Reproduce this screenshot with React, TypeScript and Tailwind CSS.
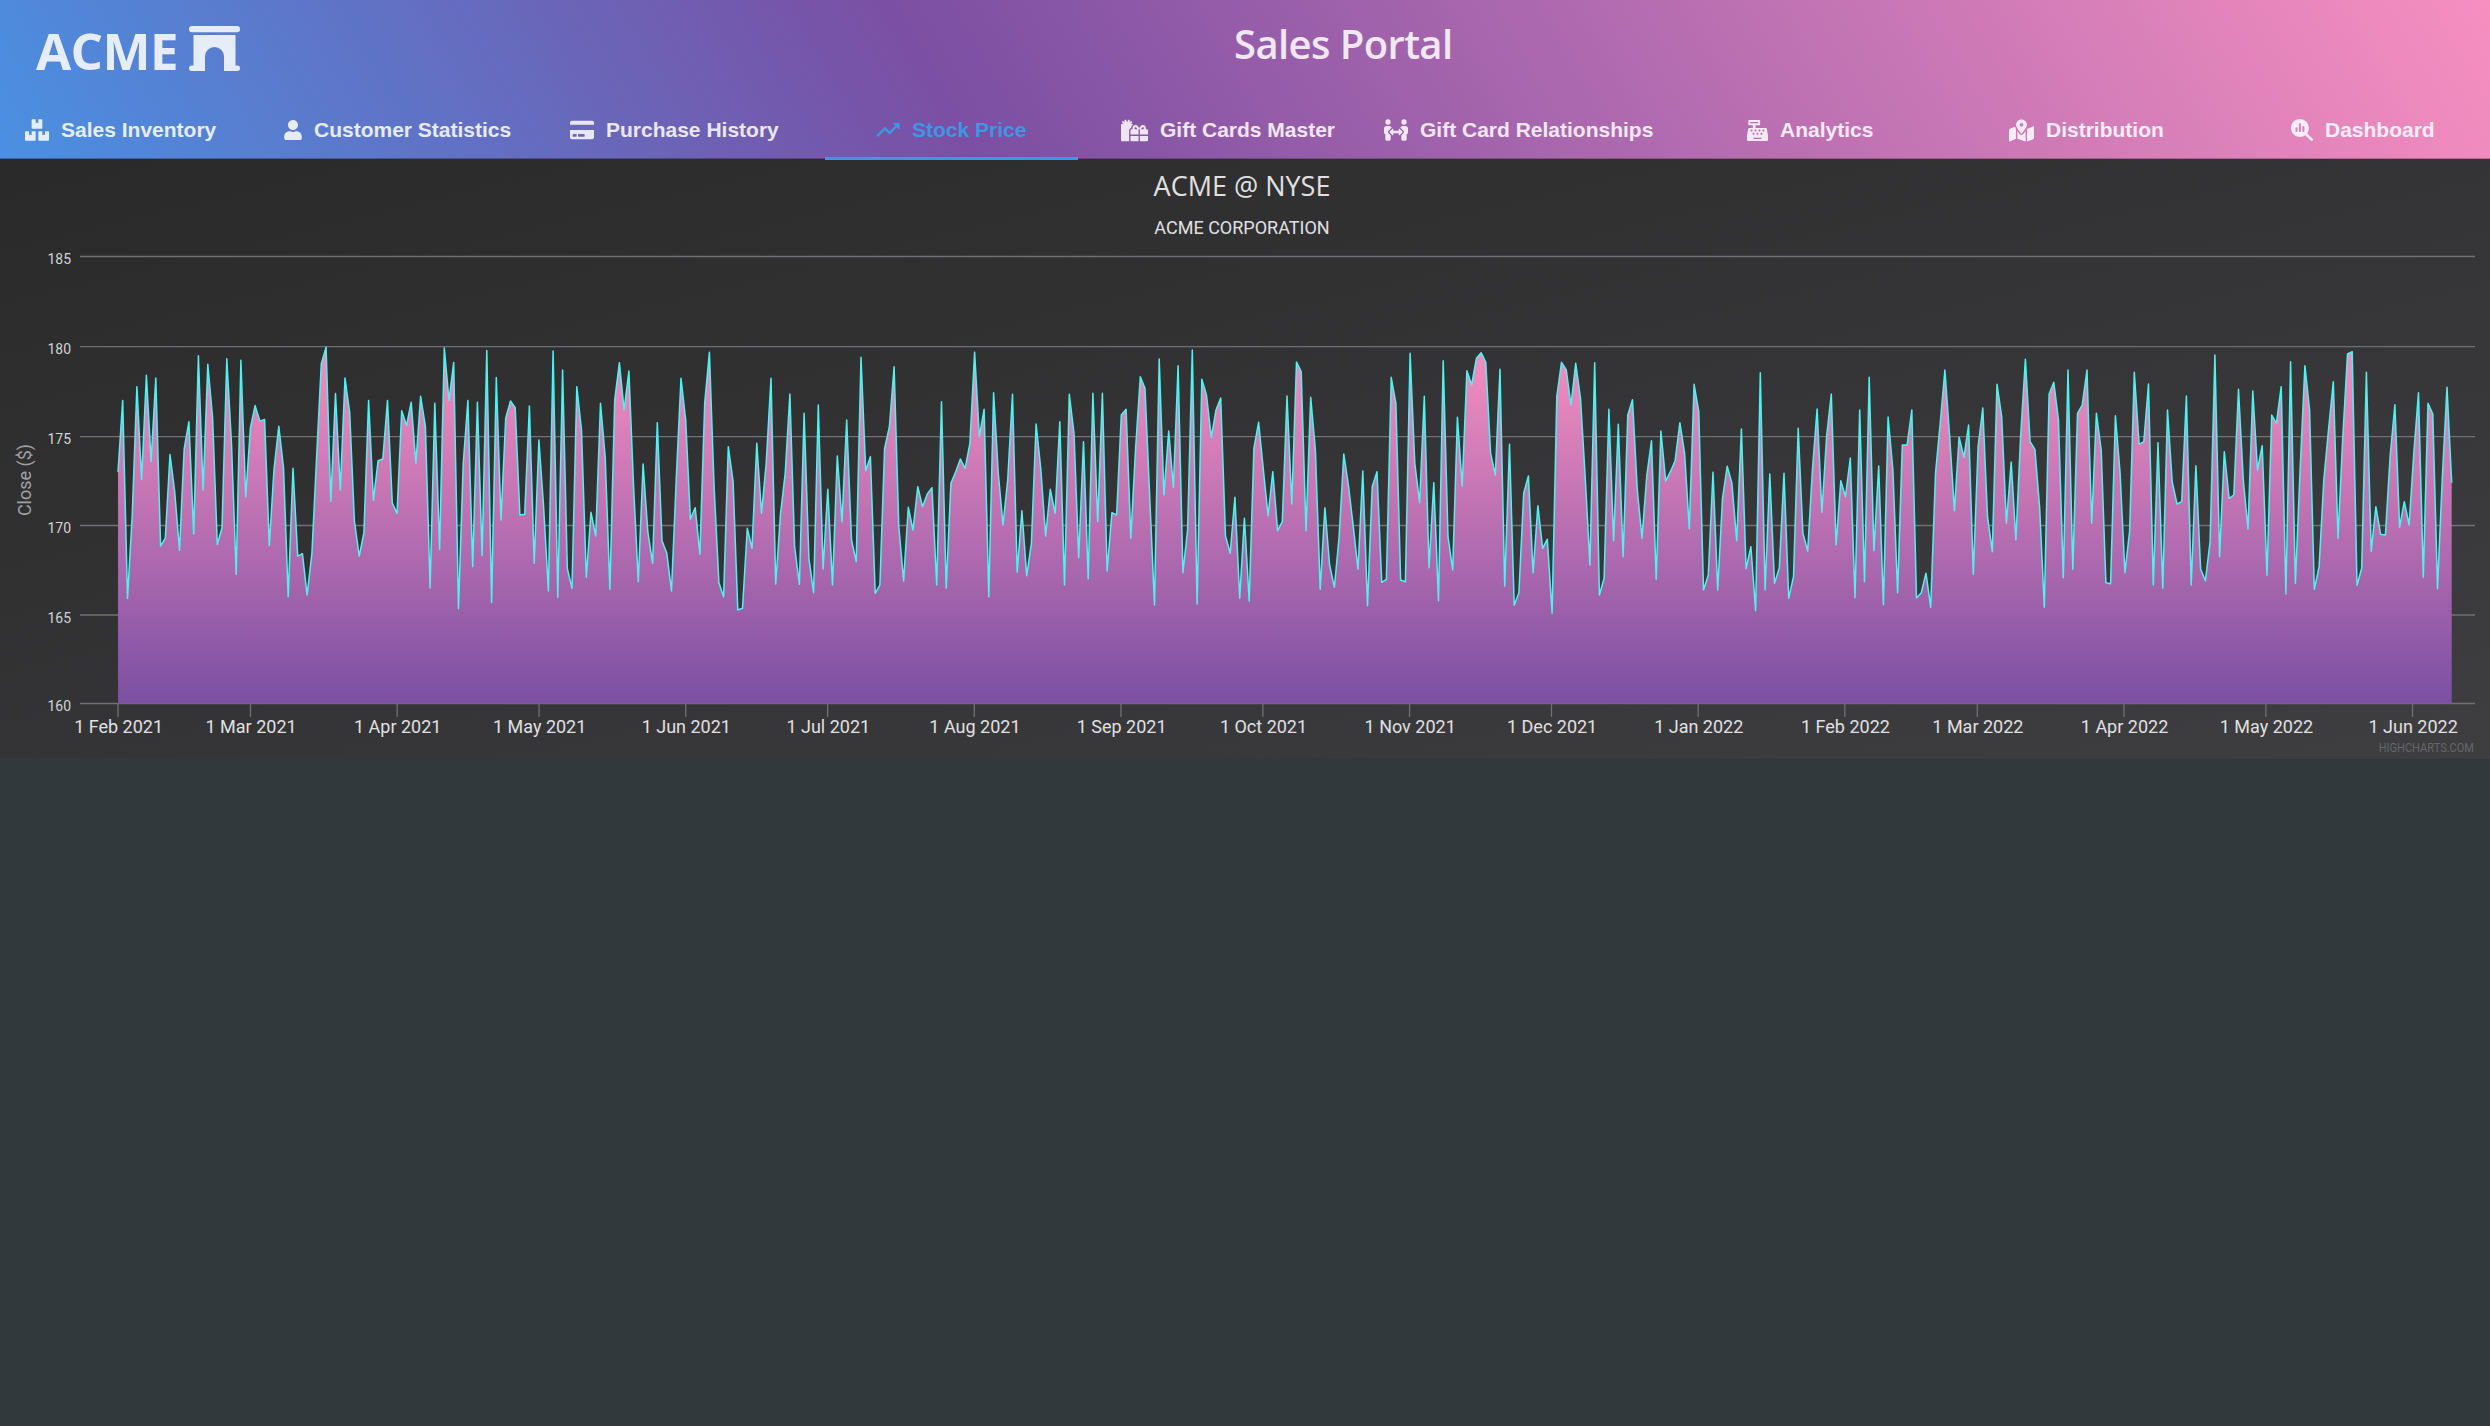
import React from "react";
import { FaBoxes, FaUser, FaCreditCard, FaGifts, FaPeopleArrows, FaCashRegister, FaMapMarkedAlt } from "react-icons/fa";
import { FaMagnifyingGlassChart } from "react-icons/fa6";
import { MdTrendingUp } from "react-icons/md";

// Traced close values, given as y in a 3x frame whose origin is page y=330.
const segA = [703,495,1070,830,455,725,422,672,430,918,895,652,760,930,635,557,883,365,755,390,545,913,865,374,620,1000,378,775,575,510,555,550,917,695,570,690,1065,692,947,940,1060,940,660,388,340,788,475,755,430,530,845,947,880,495,785,670,665,495,793,823,525,568,500,677,483,570,1040,503,928,343,495,385,1100,680,495,978,500,945,350,1082,428].map((z) => z * 1.033 - 300);
const segB = [570,265,213,233,555,553,228,700,330,530,783,63,802,120,715,775,170,300,742,547,618,220,380,778,210,98,240,123,470,755,402,605,700,278,632,670,783,450,145,270,568,533,673,220,67,470,758,800,350,455,840,835,595,655,340,550,400,145,762,555,430,192,650,763,250,685,788,225,717,478,765,378,575,270,630,695,82,422,380,790,765,355,290,110,590,753,532,600,470,530,492,473,765,215,775,460,425,387,415,340,67,320,238,800,188,430];
const segC = [585,450,193,727,542,737,640,282,420,618,478,550,275,765,193,310,683,335,746,190,575,190,723,548,555,255,238,625,360,140,175,500,825,87,495,303,472,107,728,600,60,822,148,195,322,240,204,618,670,502,805,565,813,355,277,420,557,425,602,575,198,522,96,125,602,202,360,778,533,705,772,620,372,470,590,718,423,827,470,425,757,748,142,220,750,755,70,400,518,199,713,458,812,92,620,720,262,468,122,165,85,68,97,370,435];
const segD = [118,768,343,826,788,490,438,728,527,655,628,850,200,97,120,225,100,205,440,705,98,795,745,238,632,283,680,255,209,480,625,440,332,748,303,453,425,392,278,370,596,163,245,780,735,427,780,505,409,460,632,297,716,650,842,128,780,432,760,715,430,805,740,295,610,663,420,237,547,320,192,645,452,500,384,803,240,755,142,662,408,824,261,420,788,345,345,240,804,788,730,832,430,280,120,320,542,322,382,285,733,350,234,560,665,163];
const segE = [260,580,396,630,320,88,335,358,530,832,192,157,270,743,120,718,250,225,120,580,250,360,758,761,257,430,728,605,127,343,335,162,765,338,775,240,455,522,515,198,765,407,717,752,635,75,680,365,505,495,178,450,597,183,420,347,736,255,280,170,792,95,760,420,107,240,778,710,450,300,155,625,320,72,65,766,715,127,664,530,613,615,380,224,592,515,585,370,188,742,220,252,776,450,172,458];

function spread(ys: number[], x0: number, x1: number) {
  return ys.map((z, i) => [x0 + ((x1 - x0) * i) / (ys.length - 1), 330 + z / 3] as const);
}
const points = [
  ...spread(segA, 118, 496.3),
  ...spread(segB, 501, 998.3),
  ...spread(segC, 1003, 1495.3),
  ...spread(segD, 1500, 1997),
  ...spread(segE, 2001.7, 2451.7),
];
const linePath = points.map(([x, y], i) => `${i ? "L" : "M"}${x.toFixed(1)} ${y.toFixed(1)}`).join("");
const areaPath = `${linePath}L2451.7 703.5L118 703.5Z`;

const yTicks = [
  ["185", 256.5],
  ["180", 346.7],
  ["175", 436.7],
  ["170", 525.5],
  ["165", 615],
  ["160", 703.5],
] as const;

const xTicks = [
  ["1 Feb 2021", 0],
  ["1 Mar 2021", 28],
  ["1 Apr 2021", 59],
  ["1 May 2021", 89],
  ["1 Jun 2021", 120],
  ["1 Jul 2021", 150],
  ["1 Aug 2021", 181],
  ["1 Sep 2021", 212],
  ["1 Oct 2021", 242],
  ["1 Nov 2021", 273],
  ["1 Dec 2021", 303],
  ["1 Jan 2022", 334],
  ["1 Feb 2022", 365],
  ["1 Mar 2022", 393],
  ["1 Apr 2022", 424],
  ["1 May 2022", 454],
  ["1 Jun 2022", 485],
] as const;

const tabs = [
  { label: "Sales Inventory", icon: <FaBoxes size={24} />, cls: "w-[259px]" },
  { label: "Customer Statistics", icon: <FaUser size={20} className="w-[18px]" />, cls: "w-[286px]" },
  { label: "Purchase History", icon: <FaCreditCard size={24} />, cls: "w-[255px]" },
  { label: "Stock Price", icon: <MdTrendingUp size={28} className="-mx-[2px]" />, cls: "w-[253px] pl-[51px]", active: true },
  { label: "Gift Cards Master", icon: <FaGifts size={27} />, cls: "w-[306px] pl-[43px]" },
  { label: "Gift Card Relationships", icon: <FaPeopleArrows size={24} />, cls: "w-[363px]" },
  { label: "Analytics", icon: <FaCashRegister size={21} />, cls: "w-[262px]" },
  { label: "Distribution", icon: <FaMapMarkedAlt size={25} />, cls: "w-[282px]" },
  { label: "Dashboard", icon: <FaMagnifyingGlassChart size={22} />, cls: "w-[175px]" },
];

function Arch() {
  return (
    <svg width="51" height="45" viewBox="0 0 51 45" fill="currentColor" className="ml-[12px] mt-[26px] shrink-0">
      <rect x="0" y="0" width="51" height="6.3" rx="3" />
      <path d="M4.5 9H46.5V39.5H48.25a2.75 2.75 0 0 1 0 5.5H35V30.5a9.5 9.5 0 0 0-19 0V45H2.75a2.75 2.75 0 0 1 0-5.5H4.5Z" />
    </svg>
  );
}

export default function App() {
  return (
    <div className="min-h-screen bg-[#32393c] font-['Liberation_Sans',sans-serif]">
      <header className="h-[159px] border-b border-[#00000040] bg-[linear-gradient(60deg,#4a90e2,#7b4fa3_38%,#f78fc0)] text-white/85">
        <div className="flex h-[100px]">
          <div className="flex w-[1234px] shrink-0 pl-[36px]">
            <span className="mt-[16px] h-[68px] w-[141px] font-['Open_Sans',sans-serif] text-[51px] leading-[68px] font-bold tracking-[-0.6px] whitespace-nowrap">ACME</span>
            <Arch />
          </div>
          <h1 className="mt-[14px] h-[60px] font-['Open_Sans',sans-serif] text-[40px] leading-[60px] font-semibold tracking-[-0.6px] whitespace-nowrap">Sales Portal</h1>
        </div>
        <nav className="flex h-[58px] pl-[25px]">
          {tabs.map((t) => (
            <div
              key={t.label}
              className={`relative flex shrink-0 items-center gap-[12px] pt-[2px] text-[21px] font-bold whitespace-nowrap ${t.cls} ${t.active ? "text-[#3f96e4]" : ""}`}
            >
              {t.icon}
              <span>{t.label}</span>
              {t.active && <span className="absolute right-0 -bottom-[2px] left-0 h-[3px] bg-[#3f96e4]" />}
            </div>
          ))}
        </nav>
      </header>
      <main className="h-[600px] bg-[linear-gradient(to_bottom_right,#2a2a2b,#3e3e40)]">
        <svg width="2490" height="600" viewBox="0 159 2490 600" className="block font-['Roboto',sans-serif]">
          <defs>
            <linearGradient id="area" x1="0" y1="0" x2="0" y2="1">
              <stop offset="0" stopColor="#f78fc0" />
              <stop offset="1" stopColor="#7b4fa3" />
            </linearGradient>
          </defs>
          <text x="1242" y="196" textAnchor="middle" fill="#e0e0e3" fontSize="27" fontFamily="'Open Sans', sans-serif">ACME @ NYSE</text>
          <text x="1242" y="234" textAnchor="middle" fill="#e0e0e3" fontSize="18">ACME CORPORATION</text>
          <text x="0" y="0" textAnchor="middle" fill="#a0a0a3" fontSize="18" transform="translate(31 480) rotate(-90)">Close ($)</text>
          {yTicks.map(([label, y]) => (
            <g key={label}>
              <line x1="80" x2="2475" y1={y} y2={y} stroke="#707073" strokeWidth="1.3" />
              <text transform={`translate(71 ${y + 7.5}) scale(0.9 1)`} textAnchor="end" fill="#d4d4d7" fontSize="15.5">{label}</text>
            </g>
          ))}
          {xTicks.map(([label, d]) => {
            const x = 118 + d * 4.731;
            return (
              <g key={label}>
                <line x1={x} x2={x} y1="703.5" y2="717" stroke="#707073" strokeWidth="1.3" />
                <text x={x + 0.6} y="732.5" textAnchor="middle" fill="#e0e0e3" fontSize="18">{label}</text>
              </g>
            );
          })}
          <path d={areaPath} fill="url(#area)" />
          <path d={linePath} fill="none" stroke="#50f2f0" strokeWidth="1.5" strokeLinejoin="round" />
          <text transform="translate(2474 752) scale(0.85 1)" textAnchor="end" fill="#66666a" fontSize="13">HIGHCHARTS.COM</text>
        </svg>
      </main>
    </div>
  );
}
